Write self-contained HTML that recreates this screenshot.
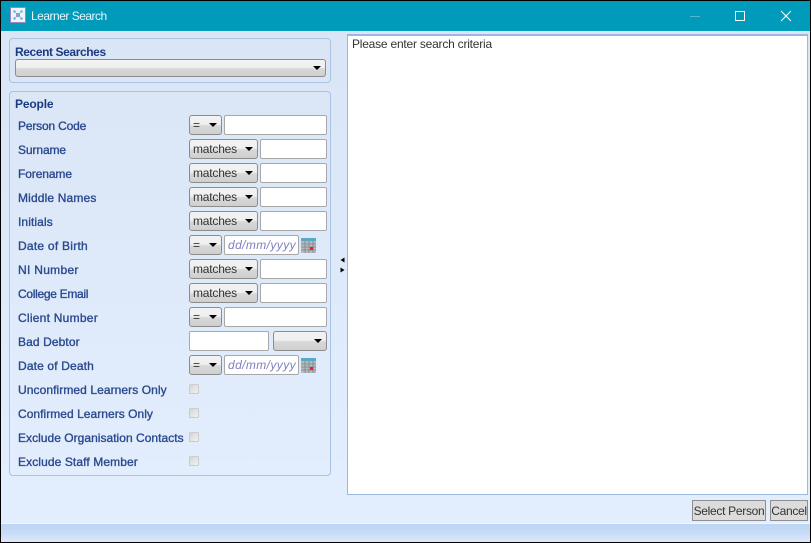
<!DOCTYPE html>
<html>
<head>
<meta charset="utf-8">
<style>
html,body{margin:0;padding:0}
body{width:811px;height:543px;position:relative;overflow:hidden;background:#000;font-family:"Liberation Sans",sans-serif;font-size:12px}
div,span{position:absolute;box-sizing:border-box}
#win{left:1px;top:1px;width:809px;height:541px;background:linear-gradient(#d9e5f5,#e3eefe);overflow:hidden}
#title{left:0;top:0;width:809px;height:30px;background:#009aba}
.panel{left:9px;width:322px;border:1px solid #a9c3e4;border-radius:4px}
.h{left:15px;margin-top:1px;color:#1c3a80;font-weight:bold;font-size:12px;line-height:15px;white-space:nowrap}
.l{left:18px;margin-top:1px;color:#2a4a8e;font-size:12px;line-height:15px;white-space:nowrap;-webkit-text-stroke:.35px #2a4a8e}
.s{height:20px;border:1px solid #8c8c8c;border-radius:3px;background:linear-gradient(#f2f2f2,#f0f0f0 45%,#d8d8d8 55%,#cfcfcf);color:#333;font-size:12px;line-height:19px;padding-left:3px;white-space:nowrap;letter-spacing:-.2px}
.s i{position:absolute;right:4px;top:7px;width:0;height:0;border-left:4px solid transparent;border-right:4px solid transparent;border-top:4px solid #000}
.t{height:20px;background:#fff;border:1px solid #a8a8a8;border-radius:2px}
.d{color:#7f7fbf;font-style:italic;font-size:12px;line-height:19px;padding-left:3px;white-space:nowrap;overflow:hidden;letter-spacing:.4px}
.c{left:189px;width:10px;height:10px;background:linear-gradient(135deg,#d6d6d6,#f0f0f0);border:1px solid #cccccc;border-radius:1px}
.b{top:499px;height:21px;background:#dcdcdc;border:1px solid #8f8f8f;color:#333;font-size:12px;line-height:20px;text-align:center;white-space:nowrap;letter-spacing:-.3px}
</style>
</head>
<body>
<div id="win">
<div id="title"></div>
</div>

<div style="left:10px;top:7px;width:16px;height:16px;background:#f0f3fa;border:1px solid #9a86c0"></div>
<svg style="position:absolute;left:10px;top:7px" width="16" height="16"><path d="M5 5L11 11M11 5L5 11" stroke="#b8c8e0" stroke-width="1"/><rect x="6" y="6" width="4" height="4" fill="#8aa0c8"/><rect x="3.5" y="3.5" width="2" height="2" fill="#38b0d8"/><rect x="10.5" y="3.5" width="2" height="2" fill="#38b0d8"/><rect x="3.5" y="10.5" width="2" height="2" fill="#38b0d8"/><rect x="10.5" y="10.5" width="2" height="2" fill="#38b0d8"/></svg>
<div style="left:31px;top:9px;color:#e8f6fa;font-size:12px;line-height:15px;white-space:nowrap;letter-spacing:-.5px">Learner Search</div>
<div style="left:690px;top:16px;width:10px;height:1px;background:#4db8ce"></div>
<div style="left:735px;top:11px;width:10px;height:10px;border:1px solid #fff"></div>
<svg style="position:absolute;left:780px;top:10px" width="12" height="12"><path d="M1 1L11 11M11 1L1 11" stroke="#fff" stroke-width="1.1" fill="none"/></svg>

<div class="panel" style="top:38px;height:45px"></div>
<div class="h" style="top:44px;letter-spacing:-.4px">Recent Searches</div>
<div class="s" style="left:15px;top:59px;width:311px;height:18px"><i style="top:6px;right:4px"></i></div>

<div class="panel" style="top:91px;height:385px"></div>
<div class="h" style="top:96px;letter-spacing:-.15px">People</div>

<div class="l" style="top:118px;letter-spacing:-.18px">Person Code</div>
<div class="s" style="left:189px;top:115px;width:33px">=<i></i></div><div class="t" style="left:224px;top:115px;width:103px"></div>

<div class="l" style="top:142px;letter-spacing:-.1px">Surname</div>
<div class="s" style="left:189px;top:139px;width:69px">matches<i></i></div><div class="t" style="left:260px;top:139px;width:67px"></div>

<div class="l" style="top:166px;letter-spacing:-.1px">Forename</div>
<div class="s" style="left:189px;top:163px;width:69px">matches<i></i></div><div class="t" style="left:260px;top:163px;width:67px"></div>

<div class="l" style="top:190px;letter-spacing:.15px">Middle Names</div>
<div class="s" style="left:189px;top:187px;width:69px">matches<i></i></div><div class="t" style="left:260px;top:187px;width:67px"></div>

<div class="l" style="top:214px;letter-spacing:.1px">Initials</div>
<div class="s" style="left:189px;top:211px;width:69px">matches<i></i></div><div class="t" style="left:260px;top:211px;width:67px"></div>

<div class="l" style="top:238px;letter-spacing:.25px">Date of Birth</div>
<div class="s" style="left:189px;top:235px;width:33px">=<i></i></div><div class="t d" style="left:224px;top:235px;width:75px">dd/mm/yyyy</div>
<svg style="position:absolute;left:301px;top:238px" width="15" height="15"><rect width="15" height="15" fill="#b4babd"/><rect width="15" height="3" fill="#5aa8c4"/><path d="M0 6H15M0 9H15M0 12H15M4 3V15M8 3V15M12 3V15" stroke="#7d8488" stroke-width=".8"/><rect x="9" y="9" width="3" height="3" fill="#d8283c"/></svg>

<div class="l" style="top:262px;letter-spacing:.3px">NI Number</div>
<div class="s" style="left:189px;top:259px;width:69px">matches<i></i></div><div class="t" style="left:260px;top:259px;width:67px"></div>

<div class="l" style="top:286px;letter-spacing:-.3px">College Email</div>
<div class="s" style="left:189px;top:283px;width:69px">matches<i></i></div><div class="t" style="left:260px;top:283px;width:67px"></div>

<div class="l" style="top:310px;letter-spacing:.25px">Client Number</div>
<div class="s" style="left:189px;top:307px;width:33px">=<i></i></div><div class="t" style="left:224px;top:307px;width:103px"></div>

<div class="l" style="top:334px;letter-spacing:.1px">Bad Debtor</div>
<div class="t" style="left:189px;top:331px;width:80px"></div><div class="s" style="left:273px;top:331px;width:54px"><i></i></div>

<div class="l" style="top:358px;letter-spacing:.15px">Date of Death</div>
<div class="s" style="left:189px;top:355px;width:33px">=<i></i></div><div class="t d" style="left:224px;top:355px;width:75px">dd/mm/yyyy</div>
<svg style="position:absolute;left:301px;top:358px" width="15" height="15"><rect width="15" height="15" fill="#b4babd"/><rect width="15" height="3" fill="#5aa8c4"/><path d="M0 6H15M0 9H15M0 12H15M4 3V15M8 3V15M12 3V15" stroke="#7d8488" stroke-width=".8"/><rect x="9" y="9" width="3" height="3" fill="#d8283c"/></svg>

<div class="l" style="top:382px;letter-spacing:.08px">Unconfirmed Learners Only</div><div class="c" style="top:384px"></div>
<div class="l" style="top:406px;letter-spacing:.04px">Confirmed Learners Only</div><div class="c" style="top:408px"></div>
<div class="l" style="top:430px;letter-spacing:.03px">Exclude Organisation Contacts</div><div class="c" style="top:432px"></div>
<div class="l" style="top:454px;letter-spacing:.1px">Exclude Staff Member</div><div class="c" style="top:456px"></div>

<svg style="position:absolute;left:338px;top:256px" width="8" height="18"><path d="M6.5 1.5V6.5L2.5 4ZM2.5 11.5V16.5L6.5 14Z" fill="#000"/></svg>

<div style="left:347px;top:34px;width:461px;height:461px;background:#fff;border:1px solid #9db8de;border-top:2px solid #9db8de"></div>
<div style="left:352px;top:37px;color:#333;font-size:12px;line-height:15px;white-space:nowrap;letter-spacing:-.22px">Please enter search criteria</div>

<div class="b" style="left:692px;top:500px;width:74px">Select Person</div>
<div class="b" style="left:770px;top:500px;width:38px">Cancel</div>

<div style="left:1px;top:523px;width:809px;height:19px;border-top:1px solid #f0f6ff;background:linear-gradient(#bcd5f5,#c4d9f5 40%,#dde9fb)"></div>
</body>
</html>
